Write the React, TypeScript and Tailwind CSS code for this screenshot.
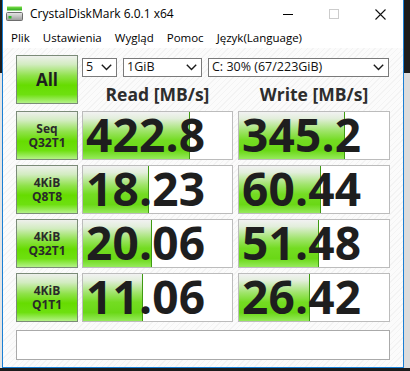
import React from 'react';

interface Result {
  label: string[];
  read: string;
  readBar: number;
  write: string;
  writeBar: number;
}

const results: Result[] = [
  { label: ['Seq', 'Q32T1'], read: '422.8', readBar: 107, write: '345.2', writeBar: 106 },
  { label: ['4KiB', 'Q8T8'], read: '18.23', readBar: 66, write: '60.44', writeBar: 82 },
  { label: ['4KiB', 'Q32T1'], read: '20.06', readBar: 69, write: '51.48', writeBar: 80 },
  { label: ['4KiB', 'Q1T1'], read: '11.06', readBar: 60, write: '26.42', writeBar: 71 },
];

const greenButton =
  'bg-[linear-gradient(to_bottom,#eef0ec_0%,#d2ecc0_18%,#8fe24a_42%,#66dc00_62%,#6ee010_82%,#b4f288_100%)] border border-[#7b8b78]';

function Chevron() {
  return (
    <svg width="11" height="7" viewBox="0 0 11 7" className="shrink-0">
      <polyline points="0.8,0.8 5.5,5.5 10.2,0.8" fill="none" stroke="#1a1a1a" strokeWidth="1.4" />
    </svg>
  );
}

function Select({ width, text }: { width: string; text: string }) {
  return (
    <div className={`${width} h-[19px] bg-white border border-[#7a7a7a] flex items-center justify-between pl-[3px] pr-[4px]`}>
      <span className="text-[12.5px] text-[#111] leading-none whitespace-nowrap">{text}</span>
      <Chevron />
    </div>
  );
}

function ValueCell({ value, bar, width }: { value: string; bar: number; width: string }) {
  return (
    <div className={`${width} h-[49px] relative bg-white border border-[#bcbcbc]`}>
      <div
        className="absolute left-0 top-0 bottom-0 bg-[linear-gradient(to_bottom,#f2f2f2_0%,#e2eedb_14%,#9fe46a_40%,#74dc22_60%,#6ad816_82%,#96ea5c_100%)] border-r border-[#3f9a12]"
        style={{ width: bar }}
      />
      <div className="relative h-full flex items-center pl-[3px]">
        <span className="font-['Open_Sans'] font-bold text-[46px] leading-[40px] text-[#1e1e1e] tracking-[0.2px] -mt-[3px]">
          {value}
        </span>
      </div>
    </div>
  );
}

export default function App() {
  return (
    <div className="w-[410px] h-[371px] bg-[#1c1c1c] flex overflow-hidden font-['Open_Sans',sans-serif]">
      <div className="w-[2px] h-full flex flex-col">
        <div className="h-[73px] bg-[#1c1c1c]" />
        <div className="h-[295px] bg-[#e4e4e4]" />
      </div>

      <div className="w-[402px] h-[368px] flex flex-col bg-white border-l border-r border-b border-[#1a7fd4]">
        {/* title bar */}
        <div className="h-[28px] flex items-center shrink-0">
          <svg width="18" height="16" viewBox="0 0 18 16" className="ml-[3px]">
            <defs>
              <linearGradient id="gtop" x1="0" y1="0" x2="0" y2="1">
                <stop offset="0" stopColor="#7be04a" />
                <stop offset="1" stopColor="#2aa81a" />
              </linearGradient>
              <linearGradient id="gbody" x1="0" y1="0" x2="0" y2="1">
                <stop offset="0" stopColor="#e8e8e8" />
                <stop offset="1" stopColor="#9a9a9a" />
              </linearGradient>
            </defs>
            <rect x="1" y="0.5" width="15" height="4" fill="url(#gtop)" />
            <rect x="0.5" y="6.5" width="16" height="8" rx="1" fill="url(#gbody)" stroke="#6d6d6d" />
            <rect x="2.5" y="10" width="3" height="2.5" fill="#2fb82a" />
          </svg>
          <span className="ml-[6px] text-[12px] text-black leading-none">CrystalDiskMark 6.0.1 x64</span>
          <div className="ml-auto flex items-center">
            <div className="w-[46px] flex justify-center">
              <div className="w-[10px] h-[1px] bg-black" />
            </div>
            <div className="w-[46px] flex justify-center">
              <div className="w-[10px] h-[10px] border border-[#cccccc]" />
            </div>
            <div className="w-[46px] flex justify-center">
              <svg width="11" height="11" viewBox="0 0 11 11">
                <path d="M0.5 0.5 L10.5 10.5 M10.5 0.5 L0.5 10.5" stroke="#111" strokeWidth="1.1" />
              </svg>
            </div>
          </div>
        </div>

        {/* menu bar */}
        <div className="h-[20px] flex items-center text-[11.5px] text-black leading-none shrink-0">
          <span className="ml-[8px]">Plik</span>
          <span className="ml-[13px]">Ustawienia</span>
          <span className="ml-[13px]">Wygląd</span>
          <span className="ml-[13px]">Pomoc</span>
          <span className="ml-[13px]">Język(Language)</span>
        </div>

        {/* client area */}
        <div className="flex-1 bg-[repeating-linear-gradient(135deg,#fbfbfb_0px,#fbfbfb_3px,#f3f3f3_3px,#f3f3f3_4px)] pl-[13px] pt-[7px]">
          <div className="flex gap-[4px]">
            <div className={`w-[62px] h-[49px] ${greenButton} flex items-center justify-center`}>
              <span className="font-bold text-[17px] text-[#1e1e1e] leading-none">All</span>
            </div>
            <div className="flex flex-col">
              <div className="flex gap-[6px] mt-[3px]">
                <Select width="w-[35px]" text="5" />
                <Select width="w-[79px]" text="1GiB" />
                <Select width="w-[181px]" text="C: 30% (67/223GiB)" />
              </div>
              <div className="flex gap-[5px] mt-[5px]">
                <div className="w-[151px] text-center font-bold text-[17.5px] text-[#2d2d2d] leading-[24px]">Read [MB/s]</div>
                <div className="w-[152px] text-center font-bold text-[17.5px] text-[#2d2d2d] leading-[24px]">Write [MB/s]</div>
              </div>
            </div>
          </div>

          <div className="flex flex-col gap-[5px] mt-[5px]">
            {results.map((r) => (
              <div key={r.label.join('-')} className="flex">
                <div className={`w-[62px] h-[49px] ${greenButton} flex flex-col items-center justify-center`}>
                  {r.label.map((l) => (
                    <span key={l} className="font-bold text-[12px] text-[#2a2a2a] leading-[14px]">
                      {l}
                    </span>
                  ))}
                </div>
                <div className="ml-[4px]">
                  <ValueCell value={r.read} bar={r.readBar} width="w-[151px]" />
                </div>
                <div className="ml-[5px]">
                  <ValueCell value={r.write} bar={r.writeBar} width="w-[152px]" />
                </div>
              </div>
            ))}
          </div>

          <div className="w-[374px] h-[30px] mt-[8px] bg-white border border-[#aaaaaa]" />
        </div>
      </div>

      <div className="w-[6px] h-full flex flex-col">
        <div className="h-[73px] bg-[#1c1c1c]" />
        <div className="h-[295px] bg-[#dcdcdc]" />
      </div>
    </div>
  );
}
